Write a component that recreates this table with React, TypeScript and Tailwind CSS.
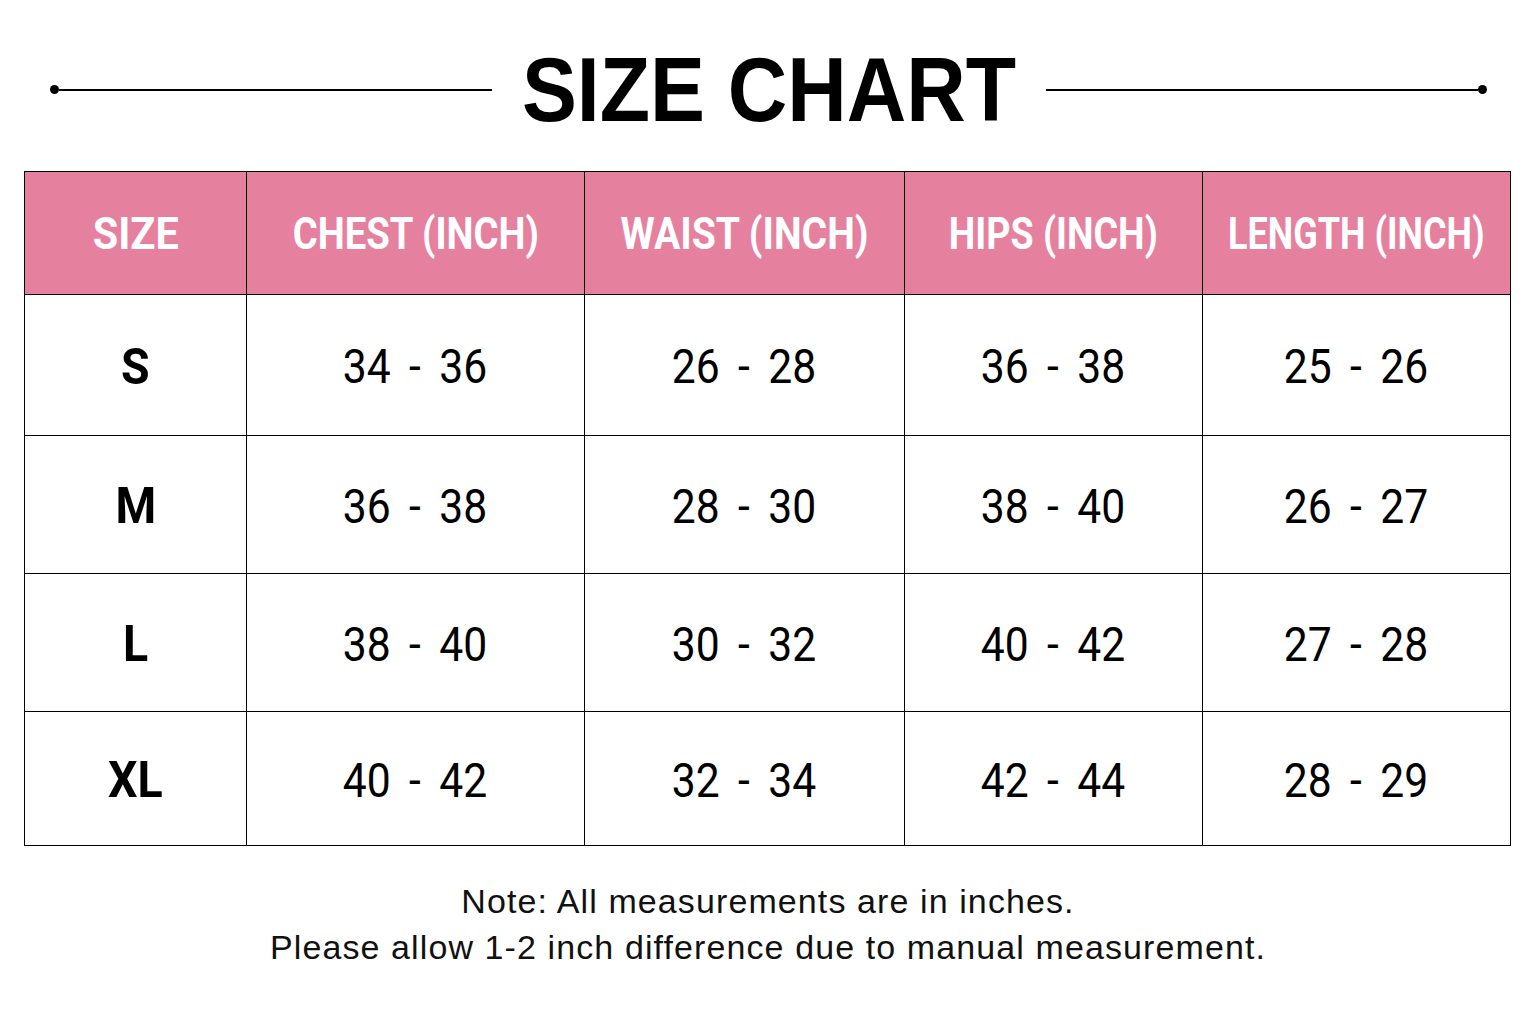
import React from "react";

const font = "font-['Roboto','Liberation_Sans',sans-serif]";

const headers: [string, string][] = [
  ["SIZE", "scale-x-[0.92]"],
  ["CHEST (INCH)", "scale-x-[0.85]"],
  ["WAIST (INCH)", "scale-x-[0.87]"],
  ["HIPS (INCH)", "scale-x-[0.835]"],
  ["LENGTH (INCH)", "scale-x-[0.8]"],
];
const rows = [
  ["S", "34 - 36", "26 - 28", "36 - 38", "25 - 26"],
  ["M", "36 - 38", "28 - 30", "38 - 40", "26 - 27"],
  ["L", "38 - 40", "30 - 32", "40 - 42", "27 - 28"],
  ["XL", "40 - 42", "32 - 34", "42 - 44", "28 - 29"],
];
const rowH = ["h-[141px]", "h-[138px]", "h-[138px]", "h-[134px]"];

function Line({ dot }: { dot: "left" | "right" }) {
  return (
    <div className="flex flex-1 items-center">
      {dot === "left" && <div className="h-[9px] w-[9px] rounded-full bg-black" />}
      <div className="h-[2px] flex-1 bg-black" />
      {dot === "right" && <div className="h-[9px] w-[9px] rounded-full bg-black" />}
    </div>
  );
}

export default function App() {
  return (
    <div className={`flex h-[1024px] w-[1536px] flex-col bg-white text-black ${font}`}>
      <div className="flex h-[171px] items-center pl-[50px] pr-[49px] pt-[8px]">
        <Line dot="left" />
        <h1 className="w-[554px] text-center font-['Liberation_Sans',Arial,sans-serif] text-[91px] font-bold leading-none">
          <span className="inline-block scale-x-[0.905]">SIZE CHART</span>
        </h1>
        <Line dot="right" />
      </div>
      <div className="ml-[24px] w-[1487px] border-[1.5px] border-black">
        <div className="grid grid-cols-[221px_338px_320px_298px_308px]">
          {headers.map(([h, sc], i) => (
            <div
              key={h}
              className={`flex h-[122px] items-center justify-center bg-[#e6809f] pt-[2px] text-[45px] font-bold text-white ${i > 0 ? "border-l-[1.5px] border-black" : ""}`}
            >
              <span className={`inline-block whitespace-nowrap ${sc}`}>{h}</span>
            </div>
          ))}
          {rows.map((r, ri) =>
            r.map((c, ci) => (
              <div
                key={ri + "-" + ci}
                className={`flex ${rowH[ri]} items-center justify-center border-t-[1.5px] border-black pt-[4px] ${ci > 0 ? "border-l-[1.5px] text-[49px] font-normal" : "text-[50px] font-bold"}`}
              >
                {ci > 0 ? (
                  <span className="inline-block scale-x-[0.87] whitespace-nowrap [word-spacing:9px]">{c}</span>
                ) : (
                  <span className="inline-block scale-x-[0.93] whitespace-nowrap">{c}</span>
                )}
              </div>
            ))
          )}
        </div>
      </div>
      <div className="mt-[32px] flex flex-col items-center font-['Liberation_Sans',Arial,sans-serif] text-[34px] leading-[46px] tracking-[1.1px] text-[#111]">
        <p className="whitespace-nowrap">Note: All measurements are in inches.</p>
        <p className="whitespace-nowrap">Please allow 1-2 inch difference due to manual measurement.</p>
      </div>
    </div>
  );
}
